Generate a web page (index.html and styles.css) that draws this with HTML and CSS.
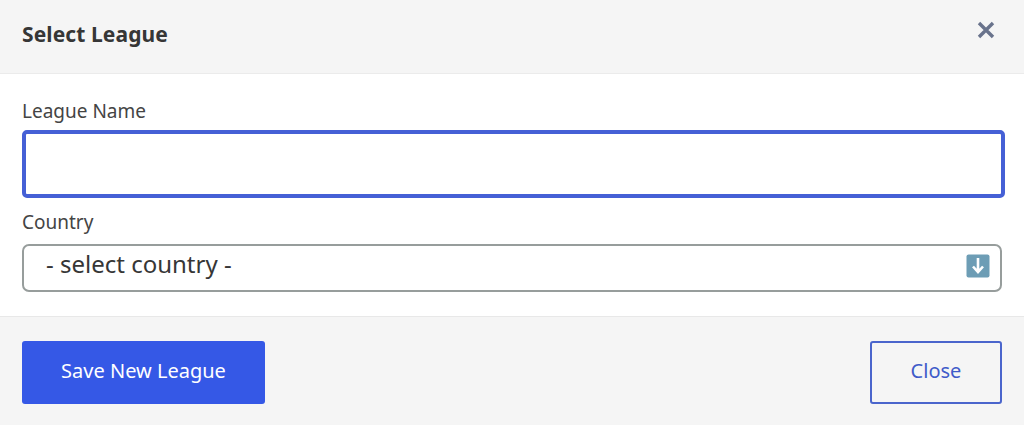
FILE: index.html
```html
<!DOCTYPE html>
<html lang="en">
<head>
  <meta charset="UTF-8">
  <meta name="viewport" content="width=device-width, initial-scale=1.0">
  <title>Select League</title>
  <link rel="stylesheet" href="styles.css">
</head>
<body>
  <div class="modal">
    <header class="modal-head">
      <h2>Select League</h2>
      <button class="close-x" aria-label="Close">
        <svg width="20" height="20" viewBox="0 0 20 20"><path d="M3 3 L17 17 M17 3 L3 17" stroke="#69738c" stroke-width="3.4" fill="none"/></svg>
      </button>
    </header>

    <section class="modal-body">
      <label class="field-label" for="leagueName">League Name</label>
      <input class="name-input" id="leagueName" type="text">

      <label class="field-label country-label" for="country">Country</label>
      <div class="select-wrap">
        <select class="country-select" id="country">
          <option>- select country -</option>
        </select>
        <svg class="select-arrow" width="24" height="24" viewBox="0 0 24 24">
          <rect x="0.5" y="0.5" width="23" height="23" rx="2" fill="#6d9db5"/>
          <path d="M12 4 V18 M7 12.5 L12 18 L17 12.5" stroke="#fff" stroke-width="2.6" fill="none"/>
        </svg>
      </div>
    </section>

    <footer class="modal-foot">
      <button class="btn btn-save">Save New League</button>
      <button class="btn btn-close">Close</button>
    </footer>
  </div>
</body>
</html>
```

FILE: styles.css
```css
body {
  margin: 0;
  font-family: "Noto Sans", "Open Sans", sans-serif;
  color: #363636;
  background-color: #fff;
}

.modal {
  width: 1024px;
  height: 425px;
  display: flex;
  flex-direction: column;
  overflow: hidden;
}

.modal-head {
  height: 73px;
  flex: none;
  display: flex;
  justify-content: space-between;
  align-items: center;
  padding: 0 28px 0 22px;
  background-color: #f5f5f5;
  border-bottom: 1px solid #ebebeb;
}

.modal-head h2 {
  margin: 0 0 5px;
  font-size: 21px;
  letter-spacing: 0.1px;
  font-weight: 700;
  color: #363636;
}

.close-x {
  padding: 0;
  border: none;
  background: none;
  display: flex;
  cursor: pointer;
  margin-bottom: 13px;
}

.modal-body {
  flex: 1;
  padding: 24px 22px 0;
}

.field-label {
  display: block;
  font-size: 19px;
  line-height: 26px;
  color: #444;
}

.name-input {
  display: block;
  box-sizing: border-box;
  width: calc(100% + 3px);
  height: 68px;
  margin-top: 6px;
  border: 4px solid #4560d6;
  border-radius: 5px;
  outline: none;
  background-color: #fff;
}

.country-label {
  margin-top: 11px;
}

.select-wrap {
  position: relative;
  margin-top: 9px;
}

.country-select {
  display: block;
  width: 100%;
  height: 48px;
  box-sizing: border-box;
  padding: 0 20px 10px 22px;
  appearance: none;
  background-color: #fff;
  border: 2px solid #979d9c;
  border-radius: 7px;
  font-family: inherit;
  font-size: 24px;
  color: #363636;
}

.select-arrow {
  position: absolute;
  top: 10px;
  right: 12px;
  pointer-events: none;
}

.modal-foot {
  height: 109px;
  flex: none;
  box-sizing: border-box;
  display: flex;
  justify-content: space-between;
  align-items: flex-start;
  padding: 24px 22px 0;
  background-color: #f5f5f5;
  border-top: 1px solid #e8e8e8;
}

.btn {
  height: 63px;
  box-sizing: border-box;
  padding-bottom: 6px;
  font-family: inherit;
  font-size: 20px;
  border-radius: 3px;
  cursor: pointer;
}

.btn-save {
  width: 243px;
  background-color: #3558e6;
  border: none;
  color: #fff;
}

.btn-close {
  width: 132px;
  background-color: transparent;
  border: 2px solid #4a65cc;
  color: #3f5bc9;
}
```
